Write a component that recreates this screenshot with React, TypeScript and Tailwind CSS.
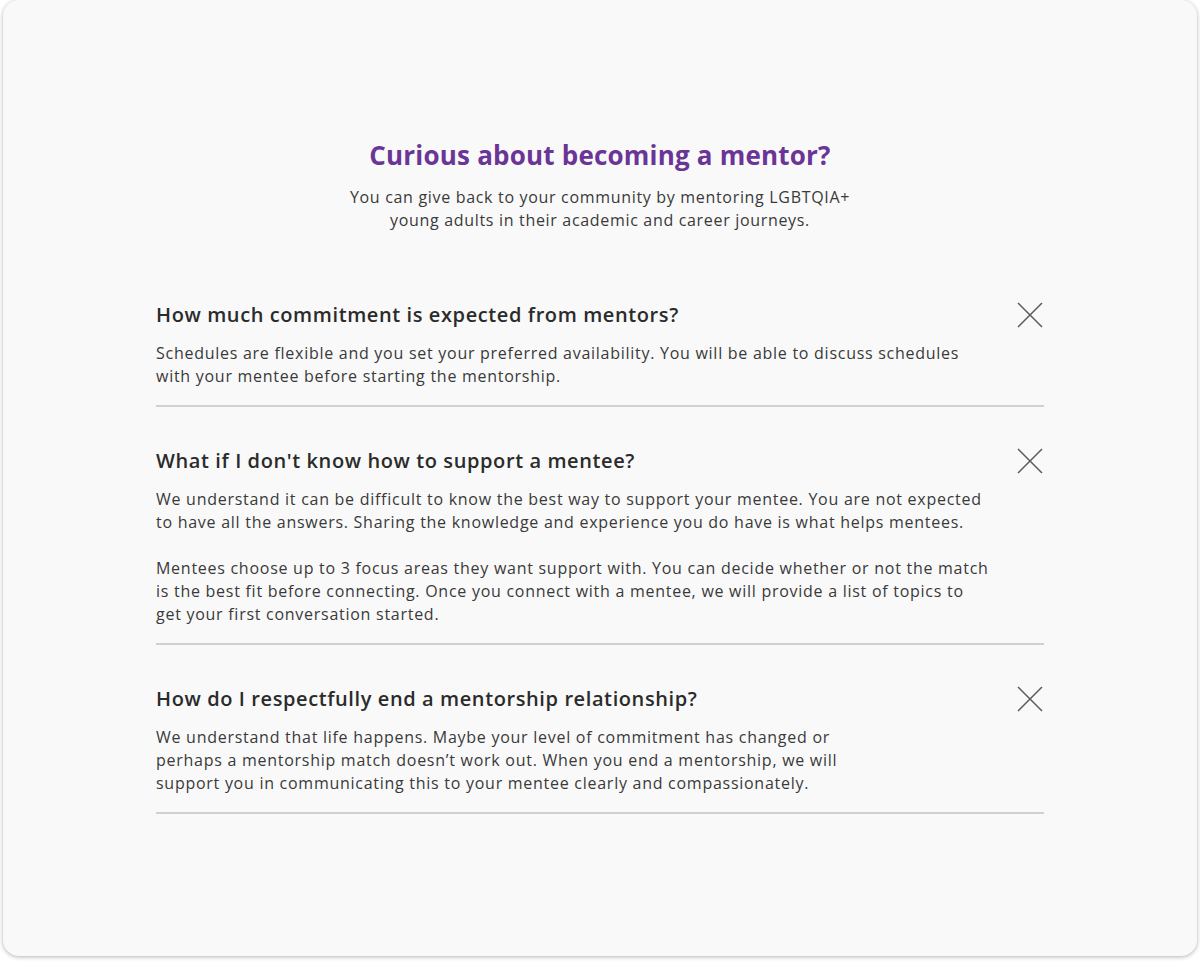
import React from "react";

const heading = { fontFamily: '"Open Sans", "Noto Sans", sans-serif' };
const body = { fontFamily: '"Open Sans", "Noto Sans", sans-serif' };

function XIcon() {
  return (
    <svg width="28" height="28" viewBox="0 0 28 28" className="shrink-0">
      <path d="M2 2 L26 26 M26 2 L2 26" stroke="#5a5a5a" strokeWidth="1.5" fill="none" />
    </svg>
  );
}

function Item({ q, children }: { q: string; children: React.ReactNode }) {
  return (
    <div className="border-b-2 border-[#d0d0d0]">
      <div className="flex items-center justify-between">
        <h3 className="text-[20px] leading-[26px] font-semibold text-[#2b2b2b] tracking-[0.6px]" style={heading}>
          {q}
        </h3>
        <XIcon />
      </div>
      <div className="mt-[13px] pb-[17px] text-[16px] leading-[23px] text-[#3a3a3a] tracking-[0.73px]" style={body}>
        {children}
      </div>
    </div>
  );
}

export default function App() {
  return (
    <div className="w-[1200px] h-[963px] bg-white pt-0 px-[3px]">
      <div className="h-[956px] rounded-[16px] bg-[#f9f9f9] shadow-[0_1px_4px_rgba(0,0,0,0.3)] flex flex-col items-center pt-[138px]">
        <h1 className="text-[26px] font-bold text-[#6a3596] leading-[34px] tracking-[0.2px]" style={heading}>
          Curious about becoming a mentor?
        </h1>
        <p className="mt-[14px] text-[16px] leading-[23px] text-[#3a3a3a] text-center tracking-[0.68px]" style={body}>
          You can give back to your community by mentoring LGBTQIA+
          <br />
          young adults in their academic and career journeys.
        </p>
        <div className="w-[888px] mt-[69px] flex flex-col gap-[40px]">
          <Item q="How much commitment is expected from mentors?">
            Schedules are flexible and you set your preferred availability. You will be able to discuss schedules
            <br />
            with your mentee before starting the mentorship.
          </Item>
          <Item q="What if I don't know how to support a mentee?">
            We understand it can be difficult to know the best way to support your mentee. You are not expected
            <br />
            to have all the answers. Sharing the knowledge and experience you do have is what helps mentees.
            <br />
            <br />
            Mentees choose up to 3 focus areas they want support with. You can decide whether or not the match
            <br />
            is the best fit before connecting. Once you connect with a mentee, we will provide a list of topics to
            <br />
            get your first conversation started.
          </Item>
          <Item q="How do I respectfully end a mentorship relationship?">
            We understand that life happens. Maybe your level of commitment has changed or
            <br />
            perhaps a mentorship match doesn’t work out. When you end a mentorship, we will
            <br />
            support you in communicating this to your mentee clearly and compassionately.
          </Item>
        </div>
      </div>
    </div>
  );
}
